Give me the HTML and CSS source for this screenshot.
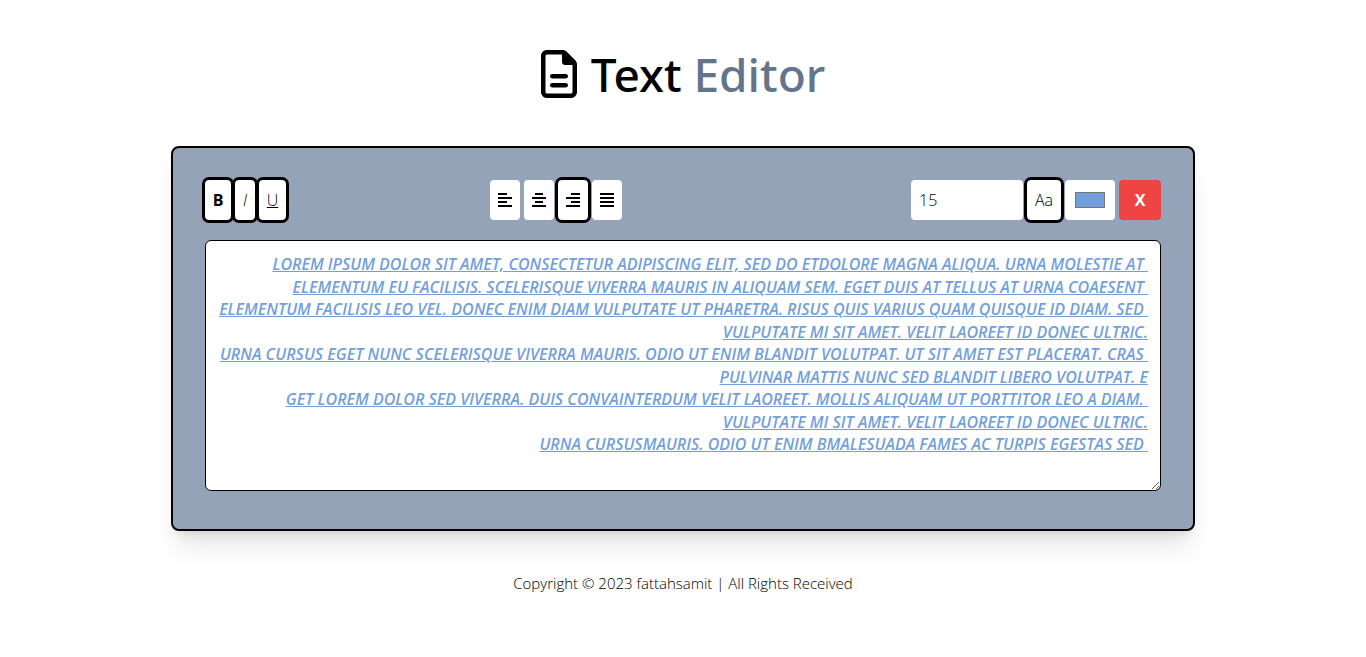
FILE: index.html
```html
<!DOCTYPE html>
<html lang="en">
<head>
<meta charset="utf-8">
<title>Text Editor</title>
<link rel="stylesheet" href="styles.css">
</head>
<body>
<header class="header">
  <svg class="logo" viewBox="0 0 384 512" aria-hidden="true"><path d="M64 464c-8.800 0-16-7.200-16-16V64c0-8.800 7.200-16 16-16H224v80c0 17.700 14.300 32 32 32h80V448c0 8.800-7.200 16-16 16H64zM64 0C28.700 0 0 28.700 0 64V448c0 35.300 28.700 64 64 64H320c35.300 0 64-28.700 64-64V154.500c0-17-6.700-33.300-18.700-45.300L274.700 18.700C262.700 6.700 246.500 0 229.500 0H64zm56 256c-13.300 0-24 10.700-24 24s10.700 24 24 24H264c13.300 0 24-10.700 24-24s-10.700-24-24-24H120zm0 96c-13.300 0-24 10.700-24 24s10.700 24 24 24H264c13.300 0 24-10.700 24-24s-10.700-24-24-24H120z"/></svg>
  <h1 class="title">Text <span class="title-accent">Editor</span></h1>
</header>
<main class="editor">
  <div class="toolbar">
    <div class="group">
      <button class="tool bold active" type="button" aria-label="Bold">B</button>
      <button class="tool italic active" type="button" aria-label="Italic">I</button>
      <button class="tool underline active" type="button" aria-label="Underline">U</button>
    </div>
    <div class="group">
      <button class="tool" type="button" aria-label="Align left"><svg class="icon" viewBox="0 0 14 14"><path d="M0 0h9v2H0zM0 4h14v2H0zM0 8h9v2H0zM0 12h14v2H0z"/></svg></button>
      <button class="tool" type="button" aria-label="Align center"><svg class="icon" viewBox="0 0 14 14"><path d="M3 0h8v2H3zM0 4h14v2H0zM3 8h8v2H3zM0 12h14v2H0z"/></svg></button>
      <button class="tool active" type="button" aria-label="Align right"><svg class="icon" viewBox="0 0 14 14"><path d="M5 0h9v2H5zM0 4h14v2H0zM5 8h9v2H5zM0 12h14v2H0z"/></svg></button>
      <button class="tool" type="button" aria-label="Justify"><svg class="icon" viewBox="0 0 14 14"><path d="M0 0h14v2H0zM0 4h14v2H0zM0 8h14v2H0zM0 12h14v2H0z"/></svg></button>
    </div>
    <div class="group group-end">
      <input class="size" type="number" value="15" aria-label="Font size">
      <button class="tool case active" type="button" aria-label="Letter case">Aa</button>
      <input class="color" type="color" value="#729fdb" aria-label="Text color">
      <button class="tool clear" type="button" aria-label="Clear">X</button>
    </div>
  </div>
  <textarea class="text" rows="10" spellcheck="false" aria-label="Text">LOREM IPSUM DOLOR SIT AMET, CONSECTETUR ADIPISCING ELIT, SED DO ETDOLORE MAGNA ALIQUA. URNA MOLESTIE AT&nbsp;
ELEMENTUM EU FACILISIS. SCELERISQUE VIVERRA MAURIS IN ALIQUAM SEM. EGET DUIS AT TELLUS AT URNA COAESENT&nbsp;
ELEMENTUM FACILISIS LEO VEL. DONEC ENIM DIAM VULPUTATE UT PHARETRA. RISUS QUIS VARIUS QUAM QUISQUE ID DIAM. SED&nbsp;
VULPUTATE MI SIT AMET. VELIT LAOREET ID DONEC ULTRIC.
URNA CURSUS EGET NUNC SCELERISQUE VIVERRA MAURIS. ODIO UT ENIM BLANDIT VOLUTPAT. UT SIT AMET EST PLACERAT. CRAS&nbsp;
PULVINAR MATTIS NUNC SED BLANDIT LIBERO VOLUTPAT. E
GET LOREM DOLOR SED VIVERRA. DUIS CONVAINTERDUM VELIT LAOREET. MOLLIS ALIQUAM UT PORTTITOR LEO A DIAM.&nbsp;
VULPUTATE MI SIT AMET. VELIT LAOREET ID DONEC ULTRIC.
URNA CURSUSMAURIS. ODIO UT ENIM BMALESUADA FAMES AC TURPIS EGESTAS SED&nbsp;</textarea>
</main>
<footer class="footer">Copyright © 2023 fattahsamit | All Rights Received</footer>
</body>
</html>
```
FILE: styles.css
```css
* {
  box-sizing: border-box;
}

body {
  margin: 0;
  background: #fff;
  color: #000;
  font-family: "Open Sans", "Noto Sans", sans-serif;
  font-size: 16px;
  font-weight: 300;
  line-height: 24px;
}

button,
input,
textarea {
  margin: 0;
  font: inherit;
  color: inherit;
}

.header {
  display: flex;
  justify-content: center;
  align-items: center;
  gap: 14px;
  padding: 50px 0 48px;
}

.logo {
  width: 36px;
  height: 48px;
}

.title {
  margin: 0;
  font-size: 46px;
  font-family: "Noto Sans", "Open Sans", sans-serif;
  font-weight: 500;
  line-height: 48px;
}

.title-accent {
  color: #64748b;
}

.editor {
  max-width: 1024px;
  margin: 0 auto;
  padding: 32px 32px 38px;
  border: 2px solid #000;
  border-radius: 8px;
  background: #94a3b8;
  box-shadow: 0 20px 25px -5px rgba(0, 0, 0, 0.1), 0 8px 10px -6px rgba(0, 0, 0, 0.1);
}

.toolbar {
  display: flex;
  justify-content: space-between;
  margin-bottom: 20px;
}

.group {
  display: flex;
  gap: 4px;
}

.group-end {
  flex-basis: 35%;
  justify-content: flex-end;
}

.tool {
  display: flex;
  justify-content: center;
  align-items: center;
  height: 40px;
  padding: 0 8px;
  border: 0;
  border-radius: 4px;
  background: #fff;
}

.active {
  outline: 3px solid #000;
}

.bold {
  width: 26px;
  font-weight: 700;
}

.italic {
  width: 20px;
  font-style: italic;
}

.underline {
  width: 27px;
  text-decoration: underline;
}

.case {
  width: 34px;
}

.clear {
  width: 42px;
  background: #ef4444;
  color: #fff;
  font-weight: 700;
}

.icon {
  display: block;
  width: 14px;
  height: 14px;
}

.size {
  width: 112px;
  height: 40px;
  padding: 8px;
  border: 0;
  border-radius: 4px;
}

.color {
  width: 50px;
  height: 40px;
  padding: 8px;
  border: 0;
  border-radius: 4px;
  background: #fff;
}

.text {
  display: block;
  width: 100%;
  padding: 12px;
  border: 1px solid #000;
  border-radius: 6px;
  background: #fff;
  color: #729fdb;
  font-size: 16px;
  font-style: italic;
  font-weight: 600;
  line-height: 1.41;
  text-align: right;
  text-decoration: underline;
  resize: both;
}

.footer {
  padding: 40px 0;
  font-size: 15px;
  text-align: center;
}
```
